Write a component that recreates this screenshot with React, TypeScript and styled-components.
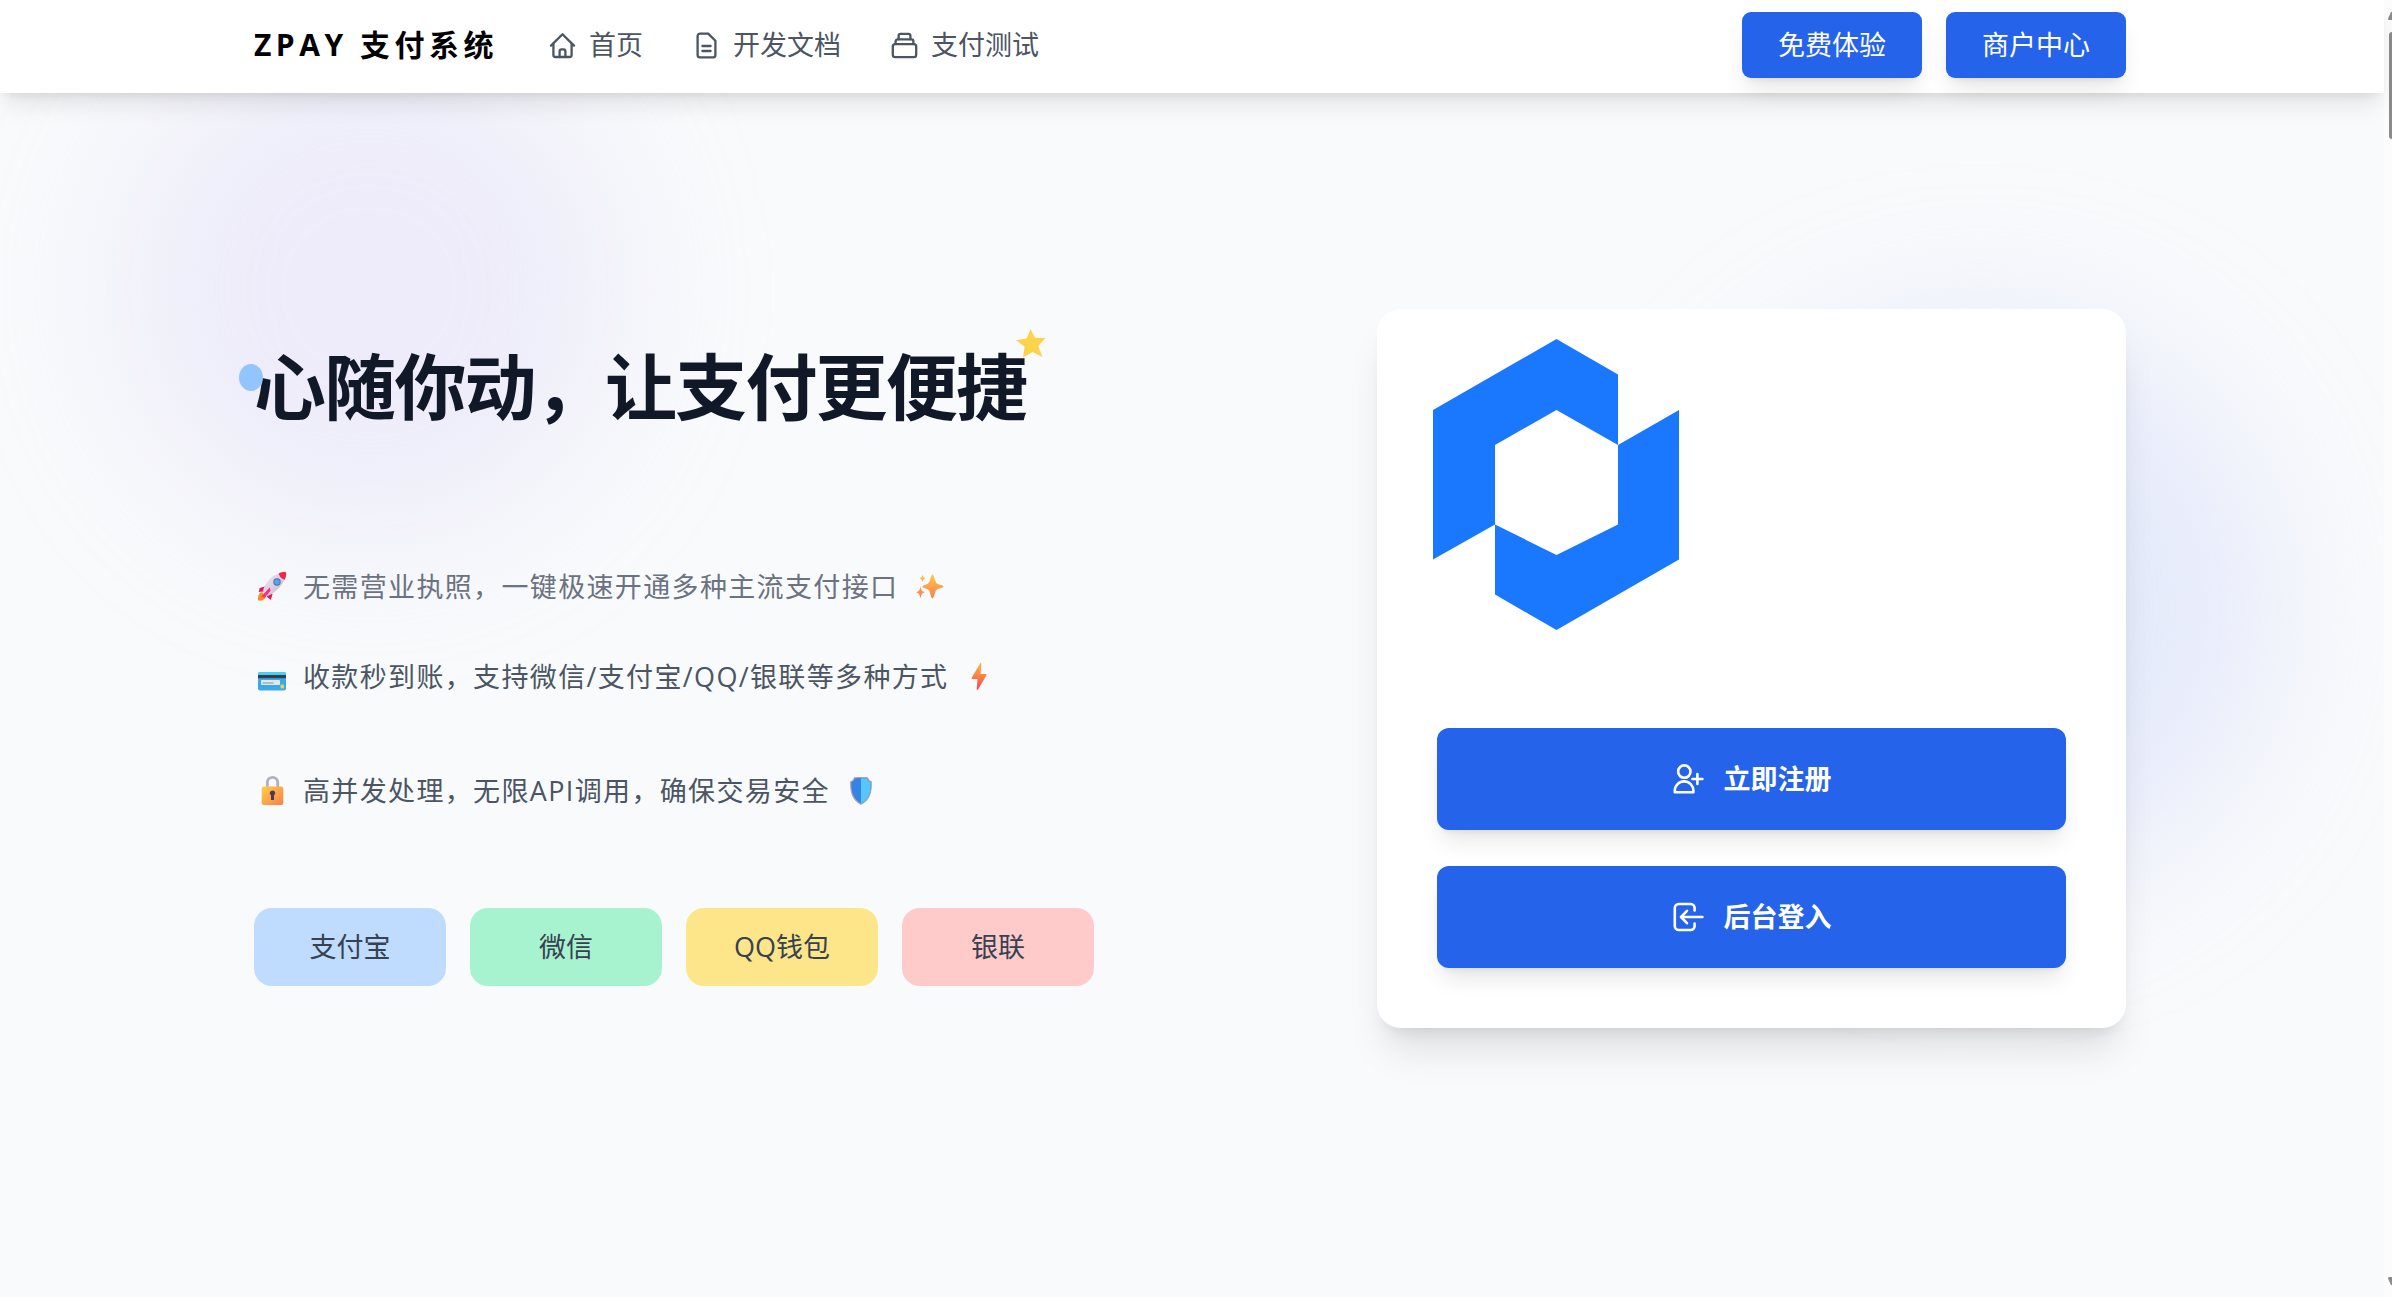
import React from "react";
import styled, { createGlobalStyle, css } from "styled-components";

const color = {
  page: "#f9fafc",
  ink: "#111827",
  body: "#4b5563",
  muted: "#6b7280",
  tag: "#374151",
  primary: "#2563eb",
  brand: "#1a78ff",
};

const shadowLg =
  "0 15px 23px -5px rgba(0, 0, 0, 0.1), 0 6px 9px -6px rgba(0, 0, 0, 0.1)";
const shadowXl =
  "0 30px 38px -8px rgba(0, 0, 0, 0.1), 0 12px 15px -9px rgba(0, 0, 0, 0.1)";

const GlobalStyle = createGlobalStyle`
  *, *::before, *::after { box-sizing: border-box; }
  body {
    margin: 0;
    background: ${color.page};
    color: ${color.body};
    font-family: "Open Sans", "Noto Sans CJK SC", sans-serif;
    font-size: 27px;
    line-height: 40px;
  }
  h1, p, ul { margin: 0; padding: 0; }
  ul { list-style: none; }
  a { color: inherit; text-decoration: none; }
  button { font: inherit; border: 0; cursor: pointer; }
`;

const Shell = styled.div`
  display: grid;
  grid-template-columns: minmax(0, 1fr) 8px;
  min-height: 100vh;
`;

const Page = styled.div`
  display: flex;
  flex-direction: column;
  min-width: 0;
`;

const Container = styled.div`
  width: 100%;
  max-width: 1920px;
  margin: 0 auto;
  padding: 0 26px 0 22px;
`;

const Header = styled.header`
  position: sticky;
  top: 0;
  z-index: 2;
  background: #fff;
  box-shadow: ${shadowLg};
`;

const HeaderRow = styled(Container)`
  display: flex;
  align-items: center;
  padding-top: 12px;
  padding-bottom: 15px;
`;

const Brand = styled.a`
  color: #000;
  font-size: 30px;
  font-weight: 700;
  letter-spacing: 0.15em;
  margin-right: 51px;
  white-space: nowrap;
`;

const Nav = styled.nav`
  display: flex;
  gap: 50px;
`;

const NavLink = styled.a`
  display: flex;
  align-items: center;
  gap: 13px;
  white-space: nowrap;
`;

const HeaderActions = styled.div`
  display: flex;
  gap: 24px;
  margin-left: auto;
`;

const primaryButton = css`
  background: ${color.primary};
  color: #fff;
  box-shadow: ${shadowLg};
  white-space: nowrap;
`;

const HeaderButton = styled.button`
  ${primaryButton}
  width: 180px;
  height: 66px;
  padding: 0;
  border-radius: 9px;
`;

const Hero = styled.main`
  position: relative;
  flex: 1;
  overflow: hidden;
`;

const Glow = styled.div<{ $tint: string; $x: string; $y: string; $size: number }>`
  position: absolute;
  left: ${(p) => p.$x};
  top: ${(p) => p.$y};
  width: ${(p) => p.$size}px;
  height: ${(p) => p.$size}px;
  border-radius: 50%;
  background: ${(p) => p.$tint};
  filter: blur(72px);
`;

const HeroRow = styled(Container)`
  position: relative;
  display: grid;
  grid-template-columns: 3fr 2fr;
  align-items: center;
  padding-top: 216px;
  padding-bottom: 216px;
`;

const Intro = styled.section`
  display: flex;
  flex-direction: column;
  align-items: flex-start;
`;

const Title = styled.h1`
  position: relative;
  color: ${color.ink};
  font-size: 72px;
  line-height: 68px;
  font-weight: 700;
  letter-spacing: -0.025em;
  white-space: nowrap;
`;

const Dot = styled.span`
  position: absolute;
  left: -15px;
  top: 12px;
  width: 24px;
  height: 27px;
  border-radius: 50%;
  background: #93c5fd;
`;

const Star = styled.svg`
  position: absolute;
  right: -20px;
  top: -23px;
`;

const Line = styled.div<{ $muted?: boolean }>`
  display: flex;
  align-items: center;
  gap: 13px;
  color: ${(p) => (p.$muted ? color.muted : color.body)};
  letter-spacing: 0.05em;
  white-space: nowrap;
`;

const Lead = styled(Line)`
  margin-top: 147px;
`;

const Features = styled.ul`
  display: flex;
  flex-direction: column;
  gap: 74px;
  margin-top: 50px;
`;

const Tags = styled.ul`
  display: grid;
  grid-template-columns: repeat(4, 1fr);
  gap: 24px;
  width: 100%;
  max-width: 840px;
  margin-top: 97px;
`;

const Tag = styled.li<{ $tint: string }>`
  display: flex;
  align-items: center;
  justify-content: center;
  height: 78px;
  border-radius: 18px;
  background: ${(p) => p.$tint};
  color: ${color.tag};
`;

const Card = styled.section`
  background: #fff;
  border-radius: 24px;
  box-shadow: ${shadowXl};
`;

const CardLogo = styled.div`
  display: flex;
  padding: 30px 56px 98px;
`;

const CardActions = styled.div`
  display: flex;
  flex-direction: column;
  gap: 36px;
  padding: 0 60px 60px;
`;

const CardButton = styled.button`
  ${primaryButton}
  display: flex;
  align-items: center;
  justify-content: center;
  gap: 16px;
  height: 102px;
  border-radius: 12px;
  font-weight: 700;
`;

const Rail = styled.div`
  position: sticky;
  top: 0;
  height: 100vh;
  display: flex;
  flex-direction: column;
  align-items: flex-end;
  overflow: hidden;
  padding: 12px 0;
  background: #fcfcfc;
`;

const RailThumb = styled.div`
  width: 3px;
  height: 107px;
  margin: 12px 0 auto;
  border-radius: 4px 0 0 4px;
  background: #8b8b8b;
`;

const NavIcon = ({ children }: { children: React.ReactNode }) => (
  <svg width="27" height="27" viewBox="0 0 27 27" fill="none" stroke="currentColor"
    strokeWidth="2.3" strokeLinecap="round" strokeLinejoin="round" aria-hidden="true">
    {children}
  </svg>
);

const HomeIcon = () => (
  <NavIcon>
    <path d="M2 13.6 13.5 2.2 25 13.6" />
    <path d="M4.4 12v11a2 2 0 0 0 2 2h14.2a2 2 0 0 0 2-2V12" />
    <path d="M10.6 25v-5.600a2 2 0 0 1 2-2h1.800a2 2 0 0 1 2 2V25" />
  </NavIcon>
);

const DocIcon = () => (
  <NavIcon>
    <path d="M4.600 4a2.400 2.400 0 0 1 2.400-2.400h8.200l7.200 7.200V23a2.400 2.400 0 0 1-2.400 2.400H7A2.400 2.400 0 0 1 4.600 23z" />
    <path d="M9.400 14h8.200M9.400 19h8.200" />
  </NavIcon>
);

const StackIcon = () => (
  <NavIcon>
    <rect x="1.800" y="12.200" width="23.400" height="13" rx="2.400" />
    <path d="M4.600 12V9.400a2 2 0 0 1 2-2h13.800a2 2 0 0 1 2 2V12" />
    <path d="M7.600 7.200V3.800a2 2 0 0 1 2-2h7.800a2 2 0 0 1 2 2v3.400" />
  </NavIcon>
);

const ActionIcon = ({ children }: { children: React.ReactNode }) => (
  <svg width="36" height="36" viewBox="0 0 36 36" fill="none" stroke="currentColor"
    strokeWidth="2.600" strokeLinecap="round" strokeLinejoin="round" aria-hidden="true">
    {children}
  </svg>
);

const UserPlusIcon = () => (
  <ActionIcon>
    <circle cx="12.300" cy="10.600" r="6.200" />
    <path d="M2.800 31.200v-1.500a9.300 9.300 0 0 1 18.600 0v1.500z" />
    <path d="M25.400 13v10M20.400 18h10" />
  </ActionIcon>
);

const LoginIcon = () => (
  <ActionIcon>
    <path d="M22.600 11.400V9a4 4 0 0 0-4-4H6.800a4 4 0 0 0-4 4v18a4 4 0 0 0 4 4h11.800a4 4 0 0 0 4-4v-2.400" />
    <path d="M30.400 18H10M15 11.800 9 18l6 6.200" />
  </ActionIcon>
);

const Emoji = ({ children }: { children: React.ReactNode }) => (
  <svg width="36" height="36" viewBox="0 0 36 36" aria-hidden="true">
    {children}
  </svg>
);

const Rocket = () => (
  <Emoji>
    <defs>
      <linearGradient id="hull" x1="0" y1="0" x2="1" y2="1">
        <stop offset="0" stopColor="#f3e9f5" />
        <stop offset="1" stopColor="#c3b5cf" />
      </linearGradient>
    </defs>
    <path d="M8 23c-3 1-4.400 4-4 8.600 4 .2 7-.8 8-4.400z" fill="#ff8a1f" />
    <path d="M11 17.500 5.600 19l-.8 4 6.600-.8zM18.600 25l-1.800 6-4-3.200 1.200-5z" fill="#e3195f" />
    <path d="M9 22c2-8 7-14.500 16-17.800 3-1 5.400-1.200 7-.8.4 2-.2 4.400-1.400 7C27 18 21.500 23.500 13.600 27z" fill="url(#hull)" />
    <path d="M24.600 4.400c3-1.200 6-1.600 7.400-1 .6 1.800 0 4.600-1.400 7.400-2.800-.8-5-3-6-6.400z" fill="#f0284a" />
    <circle cx="23" cy="13" r="3.700" fill="#5a6a9c" />
    <circle cx="23" cy="13" r="2.700" fill="#4aa8f5" />
    <path d="m15.600 18.500-8.200 9 3.200 1.300 6-7z" fill="#f92d78" />
  </Emoji>
);

const CardEmoji = () => (
  <Emoji>
    <rect x="4" y="13" width="28" height="18.500" rx="2" fill="#3aa9ea" />
    <path d="M4 15a2 2 0 0 1 2-2h24a2 2 0 0 1 2 2v1H4z" fill="#42d0f5" />
    <rect x="4" y="16" width="28" height="3.200" fill="#3b3a48" />
    <rect x="7" y="21" width="19" height="5" rx="1" fill="#dcebf7" />
    <rect x="8.500" y="23" width="11" height="2" fill="#b5bcc9" />
    <rect x="26.500" y="25.500" width="3.500" height="4" rx="1" fill="#f2cf45" />
  </Emoji>
);

const LockEmoji = () => (
  <Emoji>
    <defs>
      <linearGradient id="lock" x1="0" y1="0" x2="1" y2="1">
        <stop offset="0" stopColor="#ffcf45" />
        <stop offset="1" stopColor="#fa7f4c" />
      </linearGradient>
    </defs>
    <path d="M13.300 15V9.500a5.200 5.200 0 0 1 10.400 0V15" fill="none" stroke="#b5adc4" strokeWidth="2.800" />
    <rect x="7.700" y="13.500" width="21.600" height="18.500" rx="2.200" fill="url(#lock)" />
    <path d="M18.500 17.500a2.600 2.600 0 0 1 1.500 4.800V27h-3v-4.700a2.600 2.600 0 0 1 1.500-4.800z" fill="#4a3a5c" />
  </Emoji>
);

const Sparkles = () => (
  <Emoji>
    <defs>
      <linearGradient id="spark" x1="0" y1="0" x2="0" y2="1">
        <stop offset="0" stopColor="#ffc843" />
        <stop offset="1" stopColor="#fb7c55" />
      </linearGradient>
    </defs>
    <g fill="url(#spark)">
      <path d="M21.500 5.500c1.600 0 2.200 7.300 4.400 8.900 1.900 1.400 6.600 1.500 6.600 3.100s-4.700 1.700-6.600 3.100c-2.200 1.600-2.800 8.900-4.400 8.900s-2.200-7.300-4.400-8.900c-1.900-1.400-5.600-1.500-5.600-3.100s3.700-1.700 5.600-3.100c2.200-1.600 2.800-8.900 4.400-8.900z" />
      <path d="M11.500 5.500c.8 2.700 1 3 3 3.800-2 .8-2.200 1.100-3 3.700-.8-2.600-1-2.900-3-3.700 2-.8 2.200-1.100 3-3.800zM9.500 17.500c1 4 1.400 4.600 4.300 5.700-2.900 1.100-3.300 1.700-4.300 6.300-1-4.600-1.400-5.200-4.300-6.300 2.900-1.100 3.300-1.700 4.300-5.700z" />
    </g>
  </Emoji>
);

const Bolt = () => (
  <Emoji>
    <defs>
      <linearGradient id="bolt" x1="0" y1="0" x2="0" y2="1">
        <stop offset="0" stopColor="#ffb941" />
        <stop offset="1" stopColor="#f8424e" />
      </linearGradient>
    </defs>
    <path d="M19 4.500c.6-.8 1.400-.6 1.300.4L19.600 15h5c.9 0 1.200.7.7 1.500L17 30.500c-.5.8-1.400.6-1.300-.4L16.500 20h-5c-.9 0-1.200-.7-.7-1.500z" fill="url(#bolt)" />
  </Emoji>
);

const Shield = () => (
  <Emoji>
    <path d="M18 4.500c3.500 0 4 .3 6.500.3.500 2 1.500 3.200 3.700 4C28.800 19 26.500 27 18 31.200 9.500 27 7.200 19 7.800 8.800c2.200-.8 3.200-2 3.700-4 2.500 0 3-.3 6.500-.3z" fill="#3584e4" stroke="#a9a3b8" strokeWidth="1.200" />
    <path d="M18 5.200c3.200 0 3.700.3 6 .3.500 1.700 1.600 3 3.600 3.800C28 19 26 26.400 18 30.400z" fill="#55c7fb" />
  </Emoji>
);

const BrandMark = () => (
  <svg width="246" height="291" viewBox="0 0 246 291" fill={color.brand} role="img" aria-label="ZPAY">
    <path d="M123.500 0 185 35.500V106l-61.500-35L62 106v79.500L0 220.500V71z" />
    <path d="M246 71v149.500L123.500 291 62 255.500v-70l61.500 30.500 61.500-30.500V106z" />
  </svg>
);

const RailArrow = ({ down }: { down?: boolean }) => (
  <svg width="4" height="8" viewBox="0 0 4 8" fill="#8b8b8b" aria-hidden="true">
    <path d={down ? "M4 0H1Q0 0 0 1.500L3 8H4z" : "M4 8H1Q0 8 0 6.500L3 0H4z"} />
  </svg>
);

const tags = [
  { label: "支付宝", tint: "#bfdbfe" },
  { label: "微信", tint: "#a7f3d0" },
  { label: "QQ钱包", tint: "#fde68a" },
  { label: "银联", tint: "#fecaca" },
];

export default function App() {
  return (
    <>
      <GlobalStyle />
      <Shell>
        <Page>
          <Header>
            <HeaderRow>
              <Brand href="#">ZPAY 支付系统</Brand>
              <Nav>
                <NavLink href="#home"><HomeIcon />首页</NavLink>
                <NavLink href="#docs"><DocIcon />开发文档</NavLink>
                <NavLink href="#test"><StackIcon />支付测试</NavLink>
              </Nav>
              <HeaderActions>
                <HeaderButton type="button">免费体验</HeaderButton>
                <HeaderButton type="button">商户中心</HeaderButton>
              </HeaderActions>
            </HeaderRow>
          </Header>
          <Hero>
            <Glow $tint="rgba(214, 208, 246, 0.32)" $x="5%" $y="-54px" $size={500} />
            <Glow $tint="rgba(199, 210, 250, 0.4)" $x="71%" $y="226px" $size={576} />
            <HeroRow>
              <Intro>
                <Title>
                  <Dot />
                  心随你动，让支付更便捷
                  <Star width="30" height="30" viewBox="0 0 30 30" fill="#fcd34d" aria-hidden="true">
                    <path d="M14.500 0 19 8.700 29.500 9 22.200 17 26.500 28 16.500 23 7 28.500 8.600 17.600 0 11.200 10.600 9.400z" />
                  </Star>
                </Title>
                <Lead as="p" $muted>
                  <Rocket />无需营业执照，一键极速开通多种主流支付接口<Sparkles />
                </Lead>
                <Features>
                  <Line as="li">
                    <CardEmoji />收款秒到账，支持微信/支付宝/QQ/银联等多种方式<Bolt />
                  </Line>
                  <Line as="li">
                    <LockEmoji />高并发处理，无限API调用，确保交易安全<Shield />
                  </Line>
                </Features>
                <Tags>
                  {tags.map((t) => (
                    <Tag key={t.label} $tint={t.tint}>{t.label}</Tag>
                  ))}
                </Tags>
              </Intro>
              <Card>
                <CardLogo><BrandMark /></CardLogo>
                <CardActions>
                  <CardButton type="button"><UserPlusIcon />立即注册</CardButton>
                  <CardButton type="button"><LoginIcon />后台登入</CardButton>
                </CardActions>
              </Card>
            </HeroRow>
          </Hero>
        </Page>
        <Rail aria-hidden="true">
          <RailArrow />
          <RailThumb />
          <RailArrow down />
        </Rail>
      </Shell>
    </>
  );
}
